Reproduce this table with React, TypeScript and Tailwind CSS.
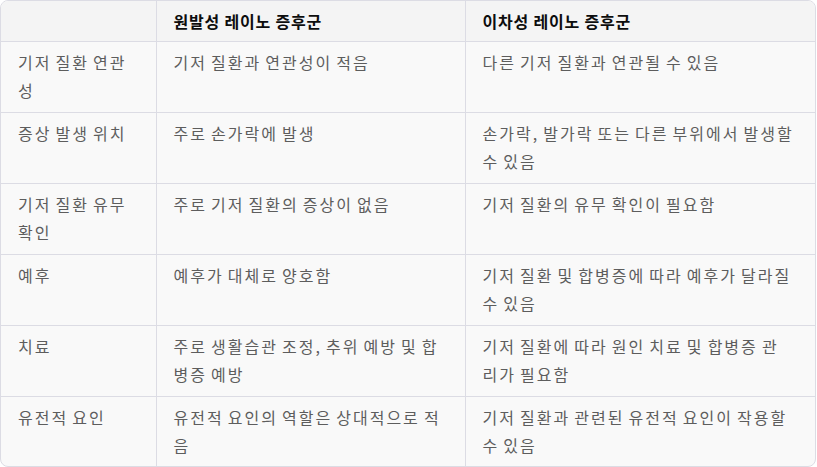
import React from "react";

const rows: [string, string, string][] = [
  ["기저 질환 연관성", "기저 질환과 연관성이 적음", "다른 기저 질환과 연관될 수 있음"],
  ["증상 발생 위치", "주로 손가락에 발생", "손가락, 발가락 또는 다른 부위에서 발생할 수 있음"],
  ["기저 질환 유무 확인", "주로 기저 질환의 증상이 없음", "기저 질환의 유무 확인이 필요함"],
  ["예후", "예후가 대체로 양호함", "기저 질환 및 합병증에 따라 예후가 달라질 수 있음"],
  ["치료", "주로 생활습관 조정, 추위 예방 및 합병증 예방", "기저 질환에 따라 원인 치료 및 합병증 관\n리가 필요함"],
  ["유전적 요인", "유전적 요인의 역할은 상대적으로 적음", "기저 질환과 관련된 유전적 요인이 작용할 수 있음"],
];

export default function App() {
  return (
    <div
      className="w-[817px] h-[467px] bg-white"
      style={{ fontFamily: '"Noto Sans CJK KR", "Noto Sans", sans-serif' }}
    >
      <div className="w-[816px] h-[467px] rounded-[8px] border border-[#dcdce4] overflow-hidden bg-[#f9f9f9]">
        <table className="w-full border-collapse table-fixed text-[16px] leading-[28px]">
          <colgroup>
            <col className="w-[155px]" />
            <col className="w-[309px]" />
            <col />
          </colgroup>
          <thead>
            <tr className="h-[40px] bg-[#f4f4f4] border-b border-[#dcdce4]">
              <th className="border-r border-[#dcdce4]" />
              <th className="border-r border-[#dcdce4] px-[17px] text-left font-bold tracking-[0.8px] text-[#0d0d0d] align-middle">
                원발성 레이노 증후군
              </th>
              <th className="px-[17px] text-left font-bold tracking-[0.8px] text-[#0d0d0d] align-middle">
                이차성 레이노 증후군
              </th>
            </tr>
          </thead>
          <tbody>
            {rows.map((r, i) => (
              <tr key={i} className={`h-[71px] ${i < rows.length - 1 ? "border-b border-[#dcdce4]" : ""}`}>
                {r.map((cell, j) => (
                  <td
                    key={j}
                    className={`align-top pt-[6px] pb-[8px] pl-[17px] pr-[16px] whitespace-pre-line break-all tracking-[2px] [word-spacing:-1.5px] text-[#5d5d5d] ${j < 2 ? "border-r border-[#dcdce4]" : ""}`}
                  >
                    {cell}
                  </td>
                ))}
              </tr>
            ))}
          </tbody>
        </table>
      </div>
    </div>
  );
}
